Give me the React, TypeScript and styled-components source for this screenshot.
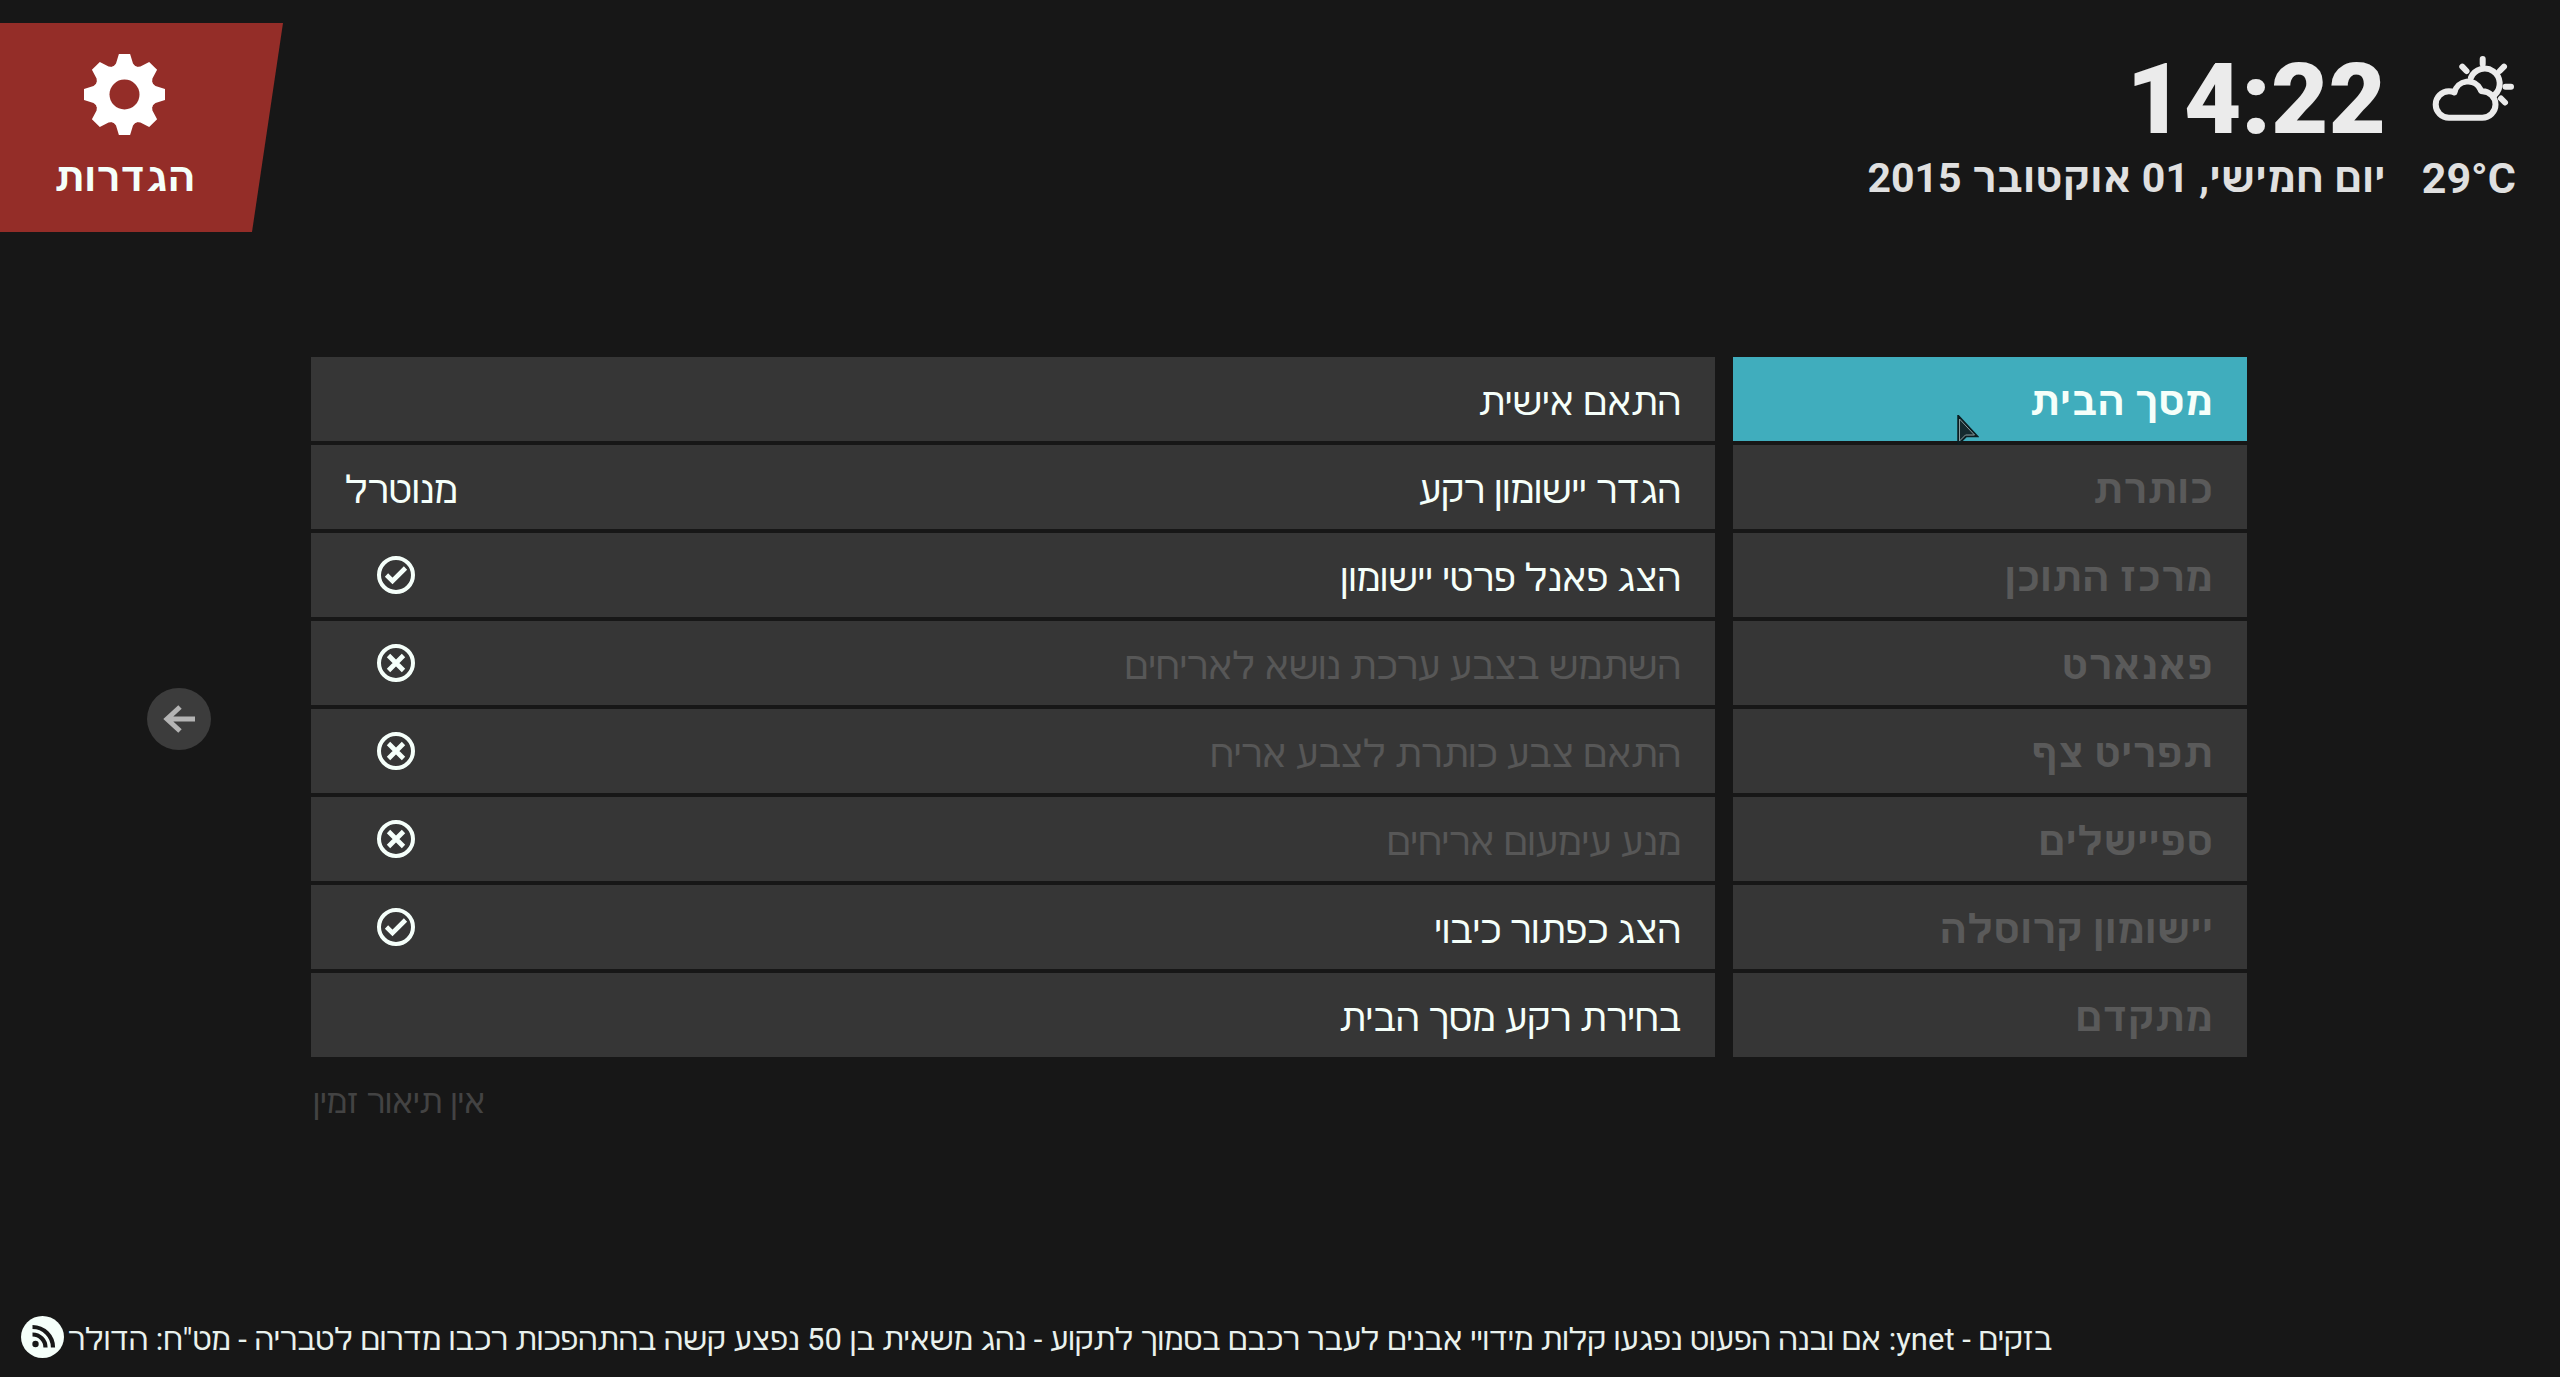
import React, { useState } from "react";
import styled, { createGlobalStyle } from "styled-components";

const GlobalStyle = createGlobalStyle`
  *, *::before, *::after { box-sizing: border-box; }
  body {
    margin: 0;
    background: #171717;
    color: #f5fffa;
    font-family: Roboto, FreeSans, "DejaVu Sans", sans-serif;
  }
  button {
    font: inherit;
    color: inherit;
    border: 0;
    padding: 0;
    margin: 0;
    cursor: inherit;
  }
`;

const Screen = styled.div`
  min-height: 100vh;
  display: flex;
  flex-direction: column;
  overflow: hidden;
`;

const Header = styled.header`
  display: flex;
  justify-content: space-between;
  align-items: flex-start;
  padding-top: 23px;
`;

const TitleTile = styled.div`
  width: 283px;
  height: 209px;
  padding: 31px 34px 0 0;
  display: flex;
  flex-direction: column;
  align-items: center;
  background: #942d28;
  clip-path: polygon(0 0, 100% 0, 252px 100%, 0 100%);

  svg { width: 81px; height: 81px; fill: #fff; }
`;

const Title = styled.h1`
  margin: 19px 0 0;
  font-size: 40px;
  line-height: 48px;
  font-weight: 700;
`;

const Status = styled.div`
  display: flex;
  gap: 36px;
  padding: 23px 44px 0 0;
  color: #e0e0e0;
`;

const StatusColumn = styled.div`
  display: flex;
  flex-direction: column;
  align-items: flex-end;
`;

const Clock = styled.time`
  height: 108px;
  font-size: 99px;
  line-height: 106px;
  font-weight: 900;
  color: #ebebeb;
`;

const Weather = styled.div`
  height: 108px;
  padding-top: 8px;
  svg { width: 84px; height: 70px; display: block; }
`;

const StatusText = styled.span<{ $large?: boolean }>`
  font-size: ${(p) => (p.$large ? 43 : 41)}px;
  line-height: 48px;
  font-weight: 700;
  white-space: nowrap;
`;

const Main = styled.main`
  display: grid;
  grid-template-columns: 311px minmax(0, 1fr) 313px;
  padding-top: 125px;
`;

const Side = styled.div`
  display: flex;
  align-items: center;
  justify-content: center;
  padding: 24px 16px 0 62px;
`;

const BackButton = styled.button`
  width: 64px;
  height: 62px;
  border-radius: 50%;
  background: #3c3c3c;
  display: flex;
  align-items: center;
  justify-content: center;
  svg { width: 34px; height: 30px; }
`;

const Panels = styled.div`
  display: grid;
  grid-template-columns: 514fr 1404fr;
  column-gap: 18px;
`;

const List = styled.div`
  display: flex;
  flex-direction: column;
  gap: 4px;
`;

const CategoryButton = styled.button<{ $active: boolean }>`
  height: 84px;
  padding: 6px 34px 0;
  text-align: right;
  font-size: 40px;
  line-height: 48px;
  font-weight: 700;
  background: ${(p) => (p.$active ? "#40adbd" : "#363636")};
  color: ${(p) => (p.$active ? "#f5fffa" : "#5a5a5a")};
`;

const rowStyles = `
  height: 84px;
  display: flex;
  align-items: center;
  justify-content: space-between;
  padding: 0 34px;
  font-size: 38px;
  line-height: 48px;
  background: #363636;
`;

const OptionButton = styled.button`
  ${rowStyles}
`;

const OptionLabel = styled.label`
  ${rowStyles}
`;

const OptionText = styled.span<{ $dim?: boolean }>`
  padding-top: 6px;
  color: ${(p) => (p.$dim ? "#575757" : "#f5fffa")};
`;

const ToggleSlot = styled.span`
  position: relative;
  width: 102px;
  height: 40px;
  display: flex;
  align-items: center;
  justify-content: center;
  svg { width: 40px; height: 40px; }
`;

const ToggleInput = styled.input`
  position: absolute;
  inset: 0;
  width: 100%;
  height: 100%;
  margin: 0;
  opacity: 0;
`;

const Note = styled.p`
  grid-column: 2;
  margin: 0;
  padding: 21px 2px 0;
  font-size: 33px;
  line-height: 48px;
  text-align: left;
  color: #434343;
`;

const Footer = styled.footer`
  position: relative;
  margin-top: auto;
  height: 72px;
  padding: 13px 508px 0 0;
  overflow: hidden;
`;

const Ticker = styled.p`
  margin: 0;
  font-size: 31px;
  line-height: 44px;
  white-space: nowrap;
  color: #e9f1ed;
`;

const FeedIcon = styled.svg`
  position: absolute;
  left: 21px;
  top: 11px;
  width: 43px;
  height: 42px;
`;

const Pointer = styled.svg`
  position: absolute;
  left: 1957px;
  top: 415px;
  width: 22px;
  height: 30px;
  pointer-events: none;
`;

const toothAngles = [0, 45, 90, 135, 180, 225, 270, 315];

const GearIcon = () => (
  <svg viewBox="-40.5 -40.5 81 81" aria-hidden="true">
    <mask id="gear-hole">
      <rect x="-41" y="-41" width="82" height="82" fill="#fff" />
      <circle r="15" fill="#000" />
    </mask>
    <g mask="url(#gear-hole)">
      <circle r="30.5" />
      {toothAngles.map((a) => (
        <path key={a} transform={`rotate(${a})`} d="M-11 -28 L-8.5 -31 L-5.6 -40.5 H5.6 L8.5 -31 L11 -28 Z" />
      ))}
    </g>
  </svg>
);

const WeatherIcon = () => (
  <svg viewBox="0 0 84 70" fill="none" stroke="#ebebeb" strokeWidth="6" strokeLinecap="round" strokeLinejoin="round" aria-hidden="true">
    <path d="M50.700 5V10M30.300 12.700L34.500 17M72 12.700L67.700 17M73.500 32.700H79M69 44.500L73 48.500" />
    <path d="M39 23.500A15 15 0 1 1 63 40.500" />
    <path d="M16.900 63.700H50.300A13.200 13.200 0 0 0 50.300 37.300Q49 37.300 48.500 35.500A13.800 13.800 0 0 0 22.500 38.500Q20 37.300 16.900 37.300A13.200 13.200 0 0 0 16.900 63.700Z" />
  </svg>
);

const CheckIcon = () => (
  <svg viewBox="0 0 40 40" fill="none" stroke="#f5fffa" strokeWidth="4" aria-hidden="true">
    <circle cx="20" cy="20" r="17" />
    <path d="M10.500 20L16.500 26L29.500 13" strokeWidth="4.600" />
  </svg>
);

const CrossIcon = () => (
  <svg viewBox="0 0 40 40" fill="none" stroke="#f5fffa" strokeWidth="4" aria-hidden="true">
    <circle cx="20" cy="20" r="17" />
    <path d="M12.500 12.500L27.500 27.500M27.500 12.500L12.500 27.500" strokeWidth="4.800" />
  </svg>
);

const ArrowIcon = () => (
  <svg viewBox="0 0 34 30" fill="none" stroke="#b4b4b4" strokeWidth="5" aria-hidden="true">
    <path d="M33 15H5M18 3L5 15L18 27" />
  </svg>
);

const categories = [
  "מסך הבית",
  "כותרת",
  "מרכז התוכן",
  "פאנארט",
  "תפריט צף",
  "ספיישלים",
  "יישומון קרוסלה",
  "מתקדם",
];

type Option = { text: string; value?: string; toggle?: boolean; dim?: boolean };

const options: Option[] = [
  { text: "התאם אישית" },
  { text: "הגדר יישומון רקע", value: "מנוטרל" },
  { text: "הצג פאנל פרטי יישומון", toggle: true },
  { text: "השתמש בצבע ערכת נושא לאריחים", toggle: false, dim: true },
  { text: "התאם צבע כותרת לצבע אריח", toggle: false, dim: true },
  { text: "מנע עימעום אריחים", toggle: false, dim: true },
  { text: "הצג כפתור כיבוי", toggle: true },
  { text: "בחירת רקע מסך הבית" },
];

const ToggleRow = ({ option }: { option: Option }) => {
  const [on, setOn] = useState(!!option.toggle);
  return (
    <OptionLabel>
      <OptionText $dim={option.dim}>{option.text}</OptionText>
      <ToggleSlot>
        {on ? <CheckIcon /> : <CrossIcon />}
        <ToggleInput type="checkbox" checked={on} onChange={() => setOn(!on)} />
      </ToggleSlot>
    </OptionLabel>
  );
};

export default function App() {
  const [active, setActive] = useState(0);
  return (
    <Screen>
      <GlobalStyle />
      <Header>
        <TitleTile>
          <GearIcon />
          <Title>הגדרות</Title>
        </TitleTile>
        <Status>
          <StatusColumn>
            <Clock>14:22</Clock>
            <StatusText dir="rtl">יום חמישי, 01 אוקטובר 2015</StatusText>
          </StatusColumn>
          <StatusColumn>
            <Weather><WeatherIcon /></Weather>
            <StatusText $large>29°C</StatusText>
          </StatusColumn>
        </Status>
      </Header>
      <Main>
        <Side>
          <BackButton type="button" aria-label="חזרה"><ArrowIcon /></BackButton>
        </Side>
        <Panels dir="rtl">
          <List>
            {categories.map((name, i) => (
              <CategoryButton key={name} type="button" $active={i === active} onClick={() => setActive(i)}>
                {name}
              </CategoryButton>
            ))}
          </List>
          <List>
            {options.map((o) =>
              o.toggle === undefined ? (
                <OptionButton key={o.text} type="button">
                  <OptionText>{o.text}</OptionText>
                  {o.value && <OptionText>{o.value}</OptionText>}
                </OptionButton>
              ) : (
                <ToggleRow key={o.text} option={o} />
              )
            )}
          </List>
        </Panels>
        <Note dir="rtl">אין תיאור זמין</Note>
      </Main>
      <Footer dir="rtl">
        <Ticker>
          בזקים - ynet: אם ובנה הפעוט נפגעו קלות מידויי אבנים לעבר רכבם בסמוך לתקוע - נהג משאית בן 50 נפצע קשה בהתהפכות רכבו מדרום לטבריה - מט"ח: הדולר
        </Ticker>
        <FeedIcon viewBox="0 0 43 42" aria-hidden="true">
          <ellipse cx="21.5" cy="21" rx="21.5" ry="21" fill="#f5fffa" />
          <g fill="none" stroke="#181818" strokeWidth="4.200">
            <path d="M11.500 11A20.500 20.500 0 0 1 32 31.500" />
            <path d="M11.500 18.500A13 13 0 0 1 24.500 31.500" />
          </g>
          <circle cx="14.500" cy="28" r="3.200" fill="#181818" />
        </FeedIcon>
      </Footer>
      <Pointer viewBox="0 0 22 30" aria-hidden="true">
        <path d="M1.500 1.500V28.500L9 21H19.500Z" fill="#142a2f" stroke="#0c1e22" strokeWidth="2.500" />
        <path d="M2.500 4V26L8.500 20H17.500Z" fill="#142a2f" stroke="#8b9c9f" strokeWidth="1" />
      </Pointer>
    </Screen>
  );
}
